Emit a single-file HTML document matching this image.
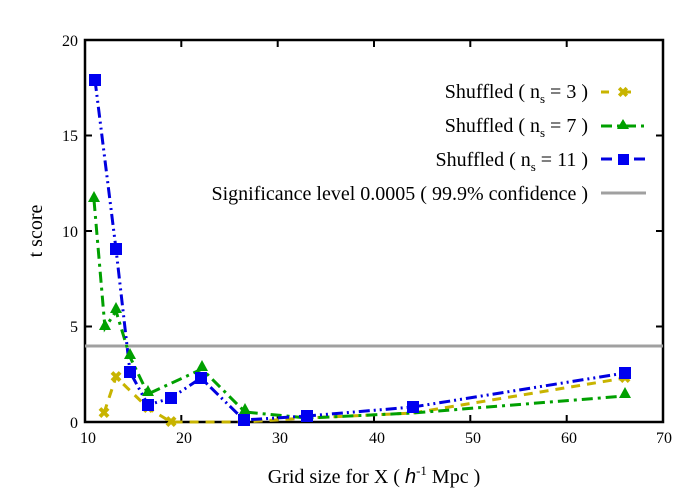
<!DOCTYPE html>
<html><head><style>body{margin:0;background:#fff}svg{display:block}text{font-family:"Liberation Serif",serif;fill:#000}</style></head><body>
<svg width="700" height="500" viewBox="0 0 700 500">
<rect x="85" y="40" width="578" height="382" fill="none" stroke="#000" stroke-width="2.5"/>
<g stroke="#000" stroke-width="2">
<line x1="85" y1="326.5" x2="92" y2="326.5"/><line x1="85" y1="231" x2="92" y2="231"/><line x1="85" y1="135.5" x2="92" y2="135.5"/>
<line x1="656" y1="326.5" x2="663" y2="326.5"/><line x1="656" y1="231" x2="663" y2="231"/><line x1="656" y1="135.5" x2="663" y2="135.5"/>
<line x1="181.3" y1="422" x2="181.3" y2="415"/><line x1="277.7" y1="422" x2="277.7" y2="415"/><line x1="374" y1="422" x2="374" y2="415"/><line x1="470.3" y1="422" x2="470.3" y2="415"/><line x1="566.7" y1="422" x2="566.7" y2="415"/>
<line x1="181.3" y1="40" x2="181.3" y2="47"/><line x1="277.7" y1="40" x2="277.7" y2="47"/><line x1="374" y1="40" x2="374" y2="47"/><line x1="470.3" y1="40" x2="470.3" y2="47"/><line x1="566.7" y1="40" x2="566.7" y2="47"/>
</g>
<g font-size="16" text-anchor="end">
<text x="78" y="428">0</text><text x="78" y="332">5</text><text x="78" y="237">10</text><text x="78" y="141">15</text><text x="78" y="46">20</text>
</g>
<g font-size="16" text-anchor="middle">
<text x="88" y="443">10</text><text x="184" y="443">20</text><text x="280" y="443">30</text><text x="377" y="443">40</text><text x="473" y="443">50</text><text x="569" y="443">60</text><text x="664" y="443">70</text>
</g>
<text x="42" y="231" font-size="20" text-anchor="middle" transform="rotate(-90 42 231)">t score</text>
<text x="374" y="483" font-size="20" text-anchor="middle">Grid size for X ( <tspan font-family="Liberation Sans" font-style="italic">h</tspan><tspan font-size="13" dy="-8">-1</tspan><tspan dy="8"> Mpc )</tspan></text>
<line x1="85" y1="346" x2="663" y2="346" stroke="#a0a0a0" stroke-width="3"/>
<polyline fill="none" stroke="#c8b400" stroke-width="3" stroke-dasharray="9,7" points="104,413 116,377 148,408 171,422 245,422 307,418 413,413 625,378"/>
<polyline fill="none" stroke="#00a000" stroke-width="3" stroke-dasharray="11,5,3,5" points="94,200 105,328 116,311 130,357 148,394 202,369 245,412 307,418 413,413 625,396"/>
<polyline fill="none" stroke="#0000e0" stroke-width="3" stroke-dasharray="11,4,2,4,2,4" points="95,80 116,249 130,372 148,405 171,398 201,378 244,420 307,416 413,407 625,373"/>
<g font-size="15" text-anchor="middle" font-weight="bold">
<text x="104" y="418" style="fill:#c8b400">✖</text><text x="116" y="382" style="fill:#c8b400">✖</text><text x="148" y="413" style="fill:#c8b400">✖</text><text x="171" y="427" style="fill:#c8b400">✖</text><text x="625" y="383" style="fill:#c8b400">✖</text>
</g>
<g fill="#00a000">
<path d="M94,191 l6,11 h-12z"/><path d="M105,319 l6,11 h-12z"/><path d="M116,302 l6,11 h-12z"/><path d="M130,348 l6,11 h-12z"/><path d="M148,385 l6,11 h-12z"/><path d="M202,360 l6,11 h-12z"/><path d="M245,403 l6,11 h-12z"/><path d="M625,387 l6,11 h-12z"/>
</g>
<g fill="#0000f0">
<rect x="89" y="74" width="12" height="12"/><rect x="110" y="243" width="12" height="12"/><rect x="124" y="366" width="12" height="12"/><rect x="142" y="399" width="12" height="12"/><rect x="165" y="392" width="12" height="12"/><rect x="195" y="372" width="12" height="12"/><rect x="238" y="414" width="12" height="12"/><rect x="301" y="410" width="12" height="12"/><rect x="407" y="401" width="12" height="12"/><rect x="619" y="367" width="12" height="12"/>
</g>
<g font-size="20" text-anchor="end">
<text x="588" y="98">Shuffled ( n<tspan font-size="13" dy="5">s</tspan><tspan dy="-5"> =  3 )</tspan></text>
<text x="588" y="132">Shuffled ( n<tspan font-size="13" dy="5">s</tspan><tspan dy="-5"> =  7 )</tspan></text>
<text x="588" y="166">Shuffled ( n<tspan font-size="13" dy="5">s</tspan><tspan dy="-5"> = 11 )</tspan></text>
<text x="588" y="200">Significance level 0.0005 ( 99.9% confidence )</text>
</g>
<line x1="601" y1="92" x2="645" y2="92" stroke="#c8b400" stroke-width="3" stroke-dasharray="8,14"/>
<text x="623" y="97" font-size="14" text-anchor="middle" style="fill:#c8b400" font-weight="bold">✖</text>
<line x1="601" y1="126" x2="645" y2="126" stroke="#00a000" stroke-width="3" stroke-dasharray="11,5,3,5"/>
<path d="M623,119 l6,10 h-12z" fill="#00a000"/>
<line x1="601" y1="159" x2="645" y2="159" stroke="#0000e0" stroke-width="3" stroke-dasharray="11,22"/>
<rect x="618" y="154" width="11" height="11" fill="#0000f0"/>
<line x1="601" y1="193" x2="646" y2="193" stroke="#a0a0a0" stroke-width="3"/>
</svg>
</body></html>
